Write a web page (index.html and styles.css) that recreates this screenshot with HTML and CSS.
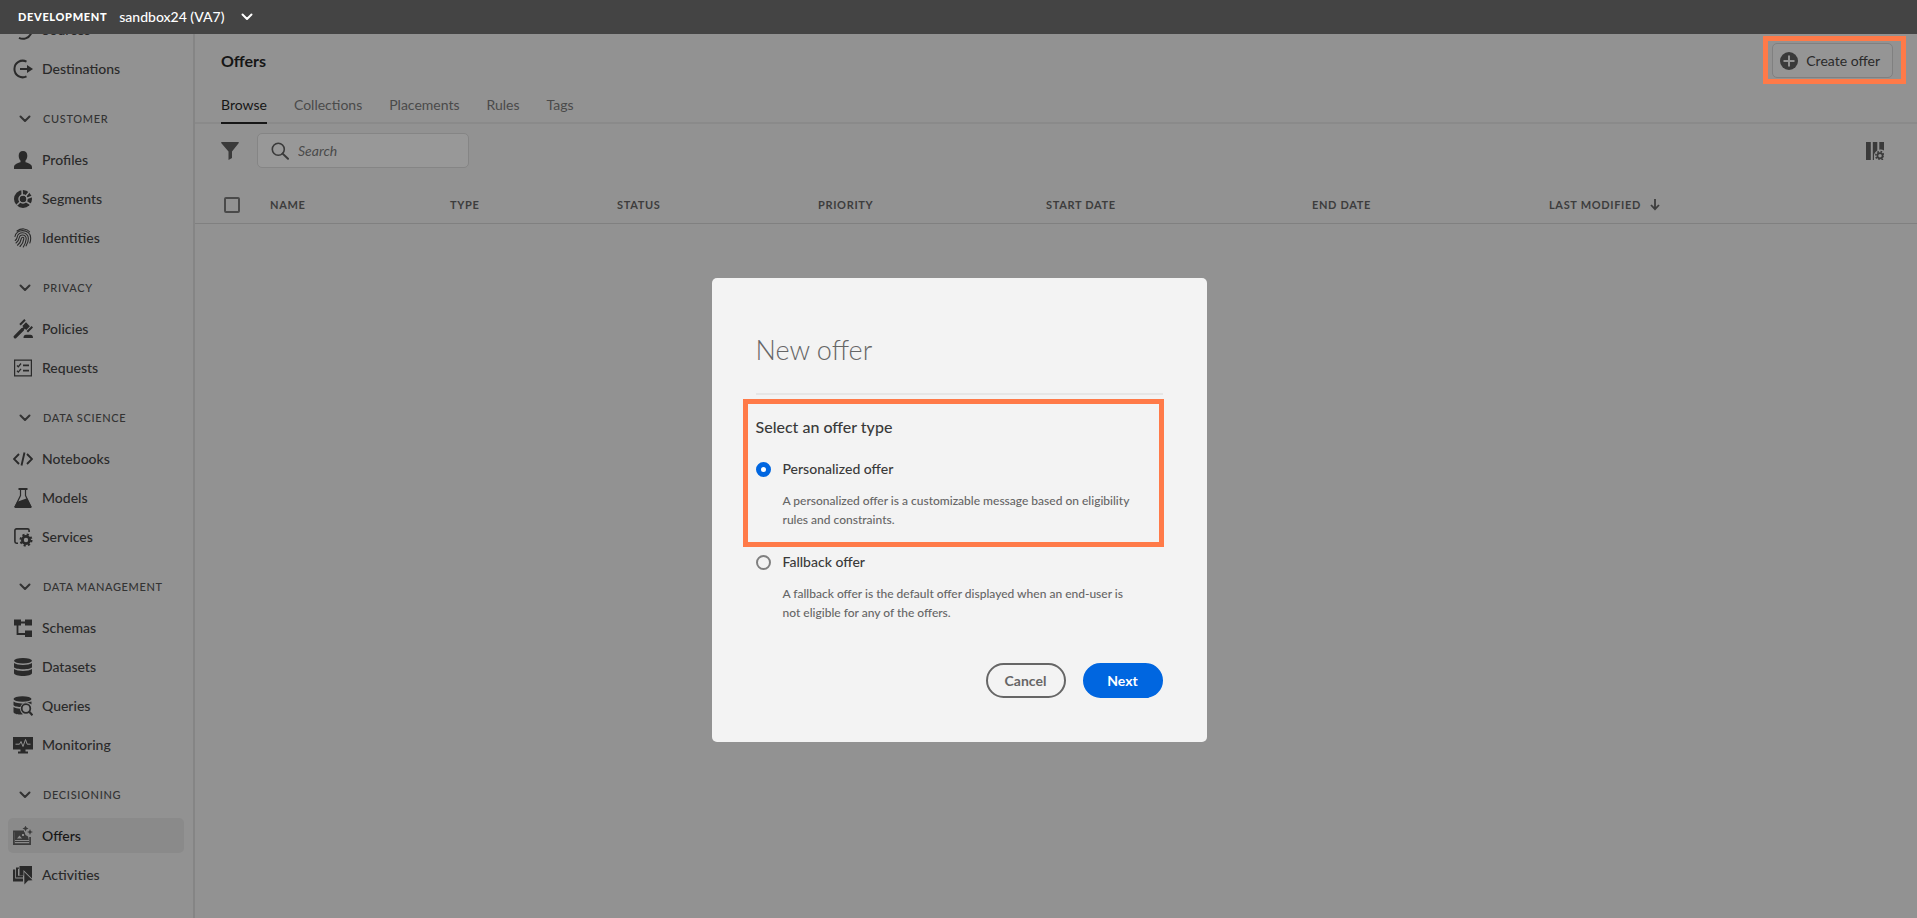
FILE: index.html
```html
<!DOCTYPE html>
<html lang="en">
<head>
<meta charset="utf-8">
<title>Offers</title>
<link rel="stylesheet" href="styles.css">
</head>
<body>
<svg class="sprite" aria-hidden="true">
  <symbol id="chev" viewBox="0 0 12 12"><path d="M1.500 3.500 6 8l4.500-4.500" fill="none" stroke="currentColor" stroke-width="2" stroke-linecap="round" stroke-linejoin="round"/></symbol>
</svg>
<header class="topbar">
  <span class="env">DEVELOPMENT</span>
  <button class="sandbox" type="button">sandbox24 (VA7) <svg class="chev"><use href="#chev"/></svg></button>
</header>
<div class="shell">
  <aside class="sidebar">
    <nav class="nav">
      <div class="group">
        <a class="item" href="#"><svg class="icon" viewBox="0 0 20 20"><path d="M14 2.200A8.500 8.500 0 1 1 6 17.800" fill="none" stroke="currentColor" stroke-width="2"/></svg>Sources</a>
        <a class="item" href="#"><svg class="icon" viewBox="0 0 20 20"><path d="M13.500 2.600A8.300 8.300 0 1 0 13.500 17.400" fill="none" stroke="currentColor" stroke-width="2"/><path d="M7 9h7V6l6 4-6 4v-3H7z"/></svg>Destinations</a>
      </div>
      <h2 class="heading"><svg class="chev"><use href="#chev"/></svg>CUSTOMER</h2>
      <div class="group">
        <a class="item" href="#"><svg class="icon" viewBox="0 0 20 20"><path d="M10 1c2.800 0 4.300 2 4.300 4.700 0 2-.7 3.800-1.800 4.800v1.700c3.300.9 6.500 2.300 6.500 4.800v2H1v-2c0-2.500 3.200-3.900 6.500-4.800v-1.700C6.400 9.500 5.700 7.700 5.700 5.700 5.700 3 7.200 1 10 1z"/></svg>Profiles</a>
        <a class="item" href="#"><svg class="icon" viewBox="0 0 20 20"><circle cx="10" cy="10" r="9"/><circle cx="10" cy="10" r="4" fill="none" stroke="#929292" stroke-width="1.500"/><circle cx="10" cy="10" r="2.800"/><path d="M9.300 6.500 9 0M12.500 7.500 16.500 2.500M13.500 9.500l6-2.300M13 12.500l5.500 3.500M7.500 12.500 3 17" stroke="#929292" stroke-width="1.500" fill="none"/></svg>Segments</a>
        <a class="item" href="#"><svg class="icon" viewBox="0 0 20 20"><g fill="none" stroke="currentColor" stroke-width="1.100" stroke-linecap="round"><path d="M4 3C8 0 14 .2 16.500 3.800M2 8.500C2.500 4.800 6 2.600 9.500 2.600c4.700 0 8.200 3 8.200 7.400 0 2-.2 3.500-.9 5M2.200 12.500C4 11 4 10 4.200 9c.6-2.600 2.800-4.200 5.300-4.200 3.300 0 5.900 2.400 5.900 5.700 0 2.500-.8 5-2.300 7.300M3 15c2.500-1.700 3-3.500 3.300-5.500.3-1.500 1.600-2.500 3.200-2.500 2.200 0 3.800 1.600 3.700 3.800C13 14 12 16.500 10.300 19M4.500 17.200c2.500-2 3.500-4.400 3.900-6.900.2-.8.6-1.100 1.200-1.100.9 0 1.300.7 1.200 1.700-.3 2.900-1.600 5.400-3.800 7.600"/></g></svg>Identities</a>
      </div>
      <h2 class="heading"><svg class="chev"><use href="#chev"/></svg>PRIVACY</h2>
      <div class="group">
        <a class="item" href="#"><svg class="icon" viewBox="0 0 20 20"><g stroke="currentColor" fill="none"><path d="M2.200 17.800 9.500 10.500" stroke-width="3.200" stroke-linecap="round"/><path d="m7 5.800 5-5M14.300 12.800 19.300 7.800" stroke-width="2"/><path d="M9 11 12 8" stroke-width="2"/></g><path d="m9.300 7 3.700-3.700 3.900 3.900-3.700 3.700zM10.500 19c0-2.200 1-3.200 2.500-3.200h4.500c1.500 0 2.500 1 2.500 3.200z"/></svg>Policies</a>
        <a class="item" href="#"><svg class="icon" viewBox="0 0 20 20"><path d="M1.600 2.100h16.800v15.800H1.600z" fill="none" stroke="currentColor" stroke-width="1.200"/><path d="m4 7.500 1.300 1.300L8 5.500M4 12.800l1.300 1.300L8 10.800" fill="none" stroke="currentColor" stroke-width="1.300"/><path d="M10 6.500h6v1.800h-6zM10 11.800h6v1.800h-6z"/></svg>Requests</a>
      </div>
      <h2 class="heading"><svg class="chev"><use href="#chev"/></svg>DATA SCIENCE</h2>
      <div class="group">
        <a class="item" href="#"><svg class="icon" viewBox="0 0 20 20"><path d="M6 5 1 10l5 5M14 5l5 5-5 5M11.500 3.500l-3 13" fill="none" stroke="currentColor" stroke-width="1.900"/></svg>Notebooks</a>
        <a class="item" href="#"><svg class="icon" viewBox="0 0 20 20"><path d="M5.500 0h9v2h-9z"/><path d="M7.500 1.500v6L2.200 18.500h15.600L12.500 7.500v-6" fill="none" stroke="currentColor" stroke-width="1.200"/><path d="m4.300 13.800 9.700-3.500 4.600 8.700c0 .6-.4 1-1 1H2.400c-.8 0-1.300-.6-1-1.200z"/></svg>Models</a>
        <a class="item" href="#"><svg class="icon" viewBox="0 0 20 20"><path d="M5 16.200H3.500a1.600 1.600 0 0 1-1.600-1.600V3.500a1.600 1.600 0 0 1 1.600-1.600h11a1.600 1.600 0 0 1 1.600 1.600V5" fill="none" stroke="currentColor" stroke-width="1.600"/><circle cx="13" cy="13" r="3.600" fill="none" stroke="currentColor" stroke-width="2.800"/><circle cx="13" cy="13" r="5.500" fill="none" stroke="currentColor" stroke-width="2" stroke-dasharray="2.160 2.160"/></svg>Services</a>
      </div>
      <h2 class="heading"><svg class="chev"><use href="#chev"/></svg>DATA MANAGEMENT</h2>
      <div class="group">
        <a class="item" href="#"><svg class="icon" viewBox="0 0 20 20"><path d="M1 1.500h7v6H1zM12 1.500h7v6h-7zM12 12.500h7v6.500h-7z"/><path d="M7 4.500h6M4.500 7v9H13" fill="none" stroke="currentColor" stroke-width="1.800"/></svg>Schemas</a>
        <a class="item" href="#"><svg class="icon" viewBox="0 0 20 20"><ellipse cx="10" cy="3.800" rx="9" ry="2.800"/><path d="M1 6c3 2.500 15 2.500 18 0v4c0 3-18 3-18 0zM1 12c3 2.500 15 2.500 18 0v4c0 4-18 4-18 0z"/></svg>Datasets</a>
        <a class="item" href="#"><svg class="icon" viewBox="0 0 20 20"><ellipse cx="9.500" cy="3" rx="9" ry="2.800"/><path d="M.5 5.500c3 2 8 2.200 11 1.800l7-1.800v3C15 5.500 8 6.500 7.500 11 4 11 .5 10 .5 9zM.5 11c2 1.200 4 1.500 6.500 1.700.3 2.500 1.200 4.300 3 5.600C6 19 .5 18 .5 16z"/><circle cx="13" cy="12.500" r="4.300" fill="none" stroke="currentColor" stroke-width="1.800"/><path d="m16 15.500 3.500 3.700" stroke="currentColor" stroke-width="2.200"/></svg>Queries</a>
        <a class="item" href="#"><svg class="icon" viewBox="0 0 20 20"><path d="M0 2h20v12.500h-7.500v2H15v2H5v-2h2.500v-2H0z"/><path class="cut thin" d="M2.500 9.200h4L8 6.500l2 5 2.500-7 1.700 4.700h3.300"/></svg>Monitoring</a>
      </div>
      <h2 class="heading"><svg class="chev"><use href="#chev"/></svg>DECISIONING</h2>
      <div class="group">
        <a class="item current" href="#" aria-current="page"><svg class="icon" viewBox="0 0 20 20"><path d="M11 5.300H.9v12.800h16.200V11" fill="none" stroke="currentColor" stroke-width="1.700"/><path fill-rule="evenodd" d="M2 6h9.500l1 3 2.500 1.500.8 3.500H2zM4 12.500h5L6.500 9.500zM9 8v2h2V8z"/><path d="M2 15h14v1H2z"/><path d="m12.500-.5.9 2.100 2.100.9-2.100.9-.9 2.100-.9-2.100-2.100-.9 2.100-.9zM17 3l.9 2.200L20 6l-2.100.8L17 9l-.9-2.200L14 6l2.100-.8z"/></svg>Offers</a>
        <a class="item" href="#"><svg class="icon" viewBox="0 0 20 20"><path d="M0 4.500h2.200v9H10v3H0z"/><path d="M3 2.500h3v1.300H5v7h5v1.700H3z"/><path d="M6.500 1H19v12.500L10.500 5v5.500h-4z"/><path d="m11.200 7 8.300 8.300-4.300.3-3.800 3.900z"/></svg>Activities</a>
      </div>
    </nav>
  </aside>
  <main class="main">
    <div class="titlebar">
      <h1 class="title">Offers</h1>
      <div class="marked">
        <button class="create" type="button"><svg class="plus" viewBox="0 0 18 18"><circle cx="9" cy="9" r="9"/><path class="cut" d="M9 3.500v11M3.500 9h11"/></svg>Create offer</button>
      </div>
    </div>
    <div class="tabs" role="tablist">
      <button class="tab selected" type="button" role="tab" aria-selected="true">Browse</button>
      <button class="tab" type="button" role="tab">Collections</button>
      <button class="tab" type="button" role="tab">Placements</button>
      <button class="tab" type="button" role="tab">Rules</button>
      <button class="tab" type="button" role="tab">Tags</button>
    </div>
    <div class="tools">
      <button class="plain" type="button" aria-label="Filter"><svg class="tool" viewBox="0 0 18 18"><path d="M1 0h16c.8 0 1 .6.6 1.200L11 9.500V16l-3.500 2V9.500L.4 1.200C0 .6.2 0 1 0z"/></svg></button>
      <label class="search"><svg class="tool" viewBox="0 0 18 18"><circle cx="7.300" cy="7.300" r="6" fill="none" stroke="currentColor" stroke-width="1.600"/><path d="m11.600 11.600 5.400 5.200" stroke="currentColor" stroke-width="2" stroke-linecap="round"/></svg><input type="search" placeholder="Search" aria-label="Search"></label>
      <button class="plain columns" type="button" aria-label="Configure columns"><svg class="tool" viewBox="0 0 18 18"><path d="M0 0h4.800v18H0zM6.800 0h4.500v8.500C9 10 8 12 8 13.500V18H6.800zM13.300 0H18v8.500c-1.500-1-3-1.200-4.700-.8z"/><circle cx="14" cy="13.800" r="5.500" fill="#929292"/><circle cx="14" cy="13.800" r="2.600" fill="none" stroke="currentColor" stroke-width="1.700"/><circle cx="14" cy="13.800" r="4.200" fill="none" stroke="currentColor" stroke-width="1.600" stroke-dasharray="1.650 1.650"/></svg></button>
    </div>
    <table class="table">
      <thead>
        <tr>
          <th class="c-check"><input class="check" type="checkbox" aria-label="Select all"></th>
          <th class="c-name">NAME</th><th class="c-type">TYPE</th><th class="c-status">STATUS</th><th class="c-priority">PRIORITY</th><th class="c-start">START DATE</th><th class="c-end">END DATE</th>
          <th>LAST MODIFIED <svg class="arrow" viewBox="0 0 10 12"><path d="M5 0v10M1 6l4 4.200L9 6" fill="none" stroke="currentColor" stroke-width="1.800"/></svg></th>
        </tr>
      </thead>
    </table>
  </main>
</div>
<div class="overlay">
  <form class="dialog" role="dialog" aria-labelledby="dlg">
    <h2 class="dialog-title" id="dlg">New offer</h2>
    <div class="options" role="radiogroup" aria-labelledby="kinds">
      <div class="outlined">
        <h3 class="legend" id="kinds">Select an offer type</h3>
        <label class="option"><input class="radio" type="radio" name="kind" checked>Personalized offer</label>
        <p class="desc">A personalized offer is a customizable message based on eligibility rules and constraints.</p>
      </div>
      <label class="option"><input class="radio" type="radio" name="kind">Fallback offer</label>
      <p class="desc">A fallback offer is the default offer displayed when an end-user is not eligible for any of the offers.</p>
    </div>
    <div class="actions">
      <button class="btn" type="button">Cancel</button>
      <button class="btn primary" type="button">Next</button>
    </div>
  </form>
</div>
</body>
</html>
```
FILE: styles.css
```css
* { box-sizing: border-box; }
body {
  margin: 0;
  height: 100vh;
  display: flex;
  flex-direction: column;
  overflow: hidden;
  background: #929292;
  color: #2a2a2a;
  font: 14px/20px Lato, "Open Sans", sans-serif;
}
h1, h2, h3, p { margin: 0; font-weight: normal; }
button { padding: 0; border: 0; background: none; color: inherit; font: inherit; }
svg { fill: currentColor; flex: none; }
.sprite { position: absolute; width: 0; height: 0; }
.cut { fill: none; stroke: #929292; stroke-width: 2; }
.thin { stroke-width: 1; }

.topbar {
  flex: none;
  height: 34px;
  padding: 0 18px;
  display: flex;
  align-items: center;
  gap: 12px;
  background: #444;
  color: #fff;
}
.env { font-size: 11px; font-weight: 900; letter-spacing: 0.06em; }
.sandbox { display: flex; align-items: center; gap: 17px; font-weight: 500; }
.chev { width: 12px; height: 12px; }

.shell { flex: 1; min-height: 0; display: flex; }
.sidebar { flex: none; width: 195px; border-right: 2px solid #858585; overflow: hidden; }
.nav { margin-top: -22px; padding: 0 9px 0 8px; }
.group { display: flex; flex-direction: column; gap: 4px; }
.item {
  height: 35px;
  padding-left: 5px;
  display: flex;
  align-items: center;
  gap: 9px;
  border-radius: 5px;
  color: #2a2a2a;
  font-weight: 500;
  text-decoration: none;
}
.icon { width: 20px; height: 20px; }
.current { background: #8a8a8a; color: #161616; }
.current .icon { color: #3a3a3a; }
.heading {
  height: 21px;
  margin: 22px 0 13px;
  padding-left: 11px;
  display: flex;
  align-items: center;
  gap: 12px;
  color: #333;
  font-size: 11px;
  font-weight: 500;
  letter-spacing: 0.06em;
}

.main { flex: 1; min-width: 0; display: flex; flex-direction: column; }
.titlebar {
  height: 53px;
  padding: 0 24px 0 26px;
  display: flex;
  align-items: center;
  justify-content: space-between;
}
.title { color: #161616; font-size: 16px; font-weight: 700; }
.marked { position: relative; }
.marked::after {
  content: "";
  position: absolute;
  inset: -7px -13px -6px -9px;
  border: 5px solid #ff7a48;
  pointer-events: none;
}
.create {
  height: 35px;
  padding: 0 12px 0 7px;
  display: flex;
  align-items: center;
  gap: 8px;
  border: 1px solid #808080;
  border-radius: 5px;
  background: #959595;
}
.plus { width: 18px; height: 18px; color: #3a3a3a; }
.tabs {
  height: 37px;
  padding: 0 26px;
  display: flex;
  gap: 27px;
  border-bottom: 2px solid #8a8a8a;
}
.tab { height: 37px; color: #4a4a4a; border-bottom: 2px solid transparent; }
.selected { border-color: #161616; color: #161616; }
.tools {
  margin-top: 9px;
  padding: 0 33px 0 26px;
  display: flex;
  align-items: center;
  gap: 18px;
}
.tool { width: 18px; height: 18px; display: block; }
.plain { color: #3a3a3a; }
.columns { margin-left: auto; }
.search {
  width: 212px;
  height: 35px;
  padding: 0 13px;
  display: flex;
  align-items: center;
  gap: 7px;
  border: 1px solid #858585;
  border-radius: 5px;
  background: #989898;
  color: #3a3a3a;
}
.search input {
  width: 100%;
  min-width: 0;
  border: 0;
  outline: 0;
  background: none;
  font: inherit;
}
.search input::placeholder { color: #4a4a4a; font-style: italic; }
.table { width: 100%; margin-top: 19px; border-collapse: collapse; table-layout: fixed; }
th {
  height: 36px;
  padding: 0;
  border-bottom: 1px solid #808080;
  text-align: left;
  vertical-align: middle;
  color: #3d3d3d;
  font-size: 11px;
  font-weight: 700;
  letter-spacing: 0.06em;
}
.c-check { width: 75px; padding-left: 29px; }
.c-name { width: 180px; }
.c-type { width: 167px; }
.c-status { width: 201px; }
.c-priority { width: 228px; }
.c-start { width: 266px; }
.c-end { width: 237px; }
.check {
  appearance: none;
  display: block;
  width: 16px;
  height: 16px;
  margin: 0;
  border: 2px solid #4a4a4a;
  border-radius: 2px;
}
.arrow { width: 10px; height: 12px; margin-left: 6px; vertical-align: -2px; }

.overlay {
  position: fixed;
  inset: 0;
  padding: 102px 0 0 1px;
  display: flex;
  align-items: center;
  justify-content: center;
}
.dialog { width: 495px; padding: 52px 44px 44px; border-radius: 5px; background: #f3f3f3; }
.dialog-title {
  padding-bottom: 23px;
  border-bottom: 2px solid #e6e6e6;
  color: #666;
  font-size: 27px;
  line-height: 40px;
  font-weight: 300;
}
.outlined { position: relative; padding-bottom: 23px; }
.outlined::after {
  content: "";
  position: absolute;
  inset: 4px -1px 5px -13px;
  border: 5px solid #ff7a48;
  pointer-events: none;
}
.legend { padding: 22px 0; color: #3a3a3a; font-size: 16px; font-weight: 500; }
.option { display: flex; align-items: center; gap: 12px; color: #3a3a3a; font-weight: 500; }
.radio {
  appearance: none;
  width: 15px;
  height: 15px;
  margin: 0;
  border: 2px solid #808080;
  border-radius: 50%;
}
.radio:checked { border: 5px solid #0066e0; background: #fff; }
.desc { padding: 12px 20px 0 27px; color: #666; font-size: 12px; line-height: 19px; font-weight: 500; }
.actions { margin-top: 41px; display: flex; justify-content: flex-end; gap: 17px; }
.btn {
  width: 80px;
  height: 35px;
  border: 2px solid #666;
  border-radius: 18px;
  color: #666;
  font-weight: 700;
}
.primary { border-color: #0066e0; background: #0066e0; color: #fff; }
```
